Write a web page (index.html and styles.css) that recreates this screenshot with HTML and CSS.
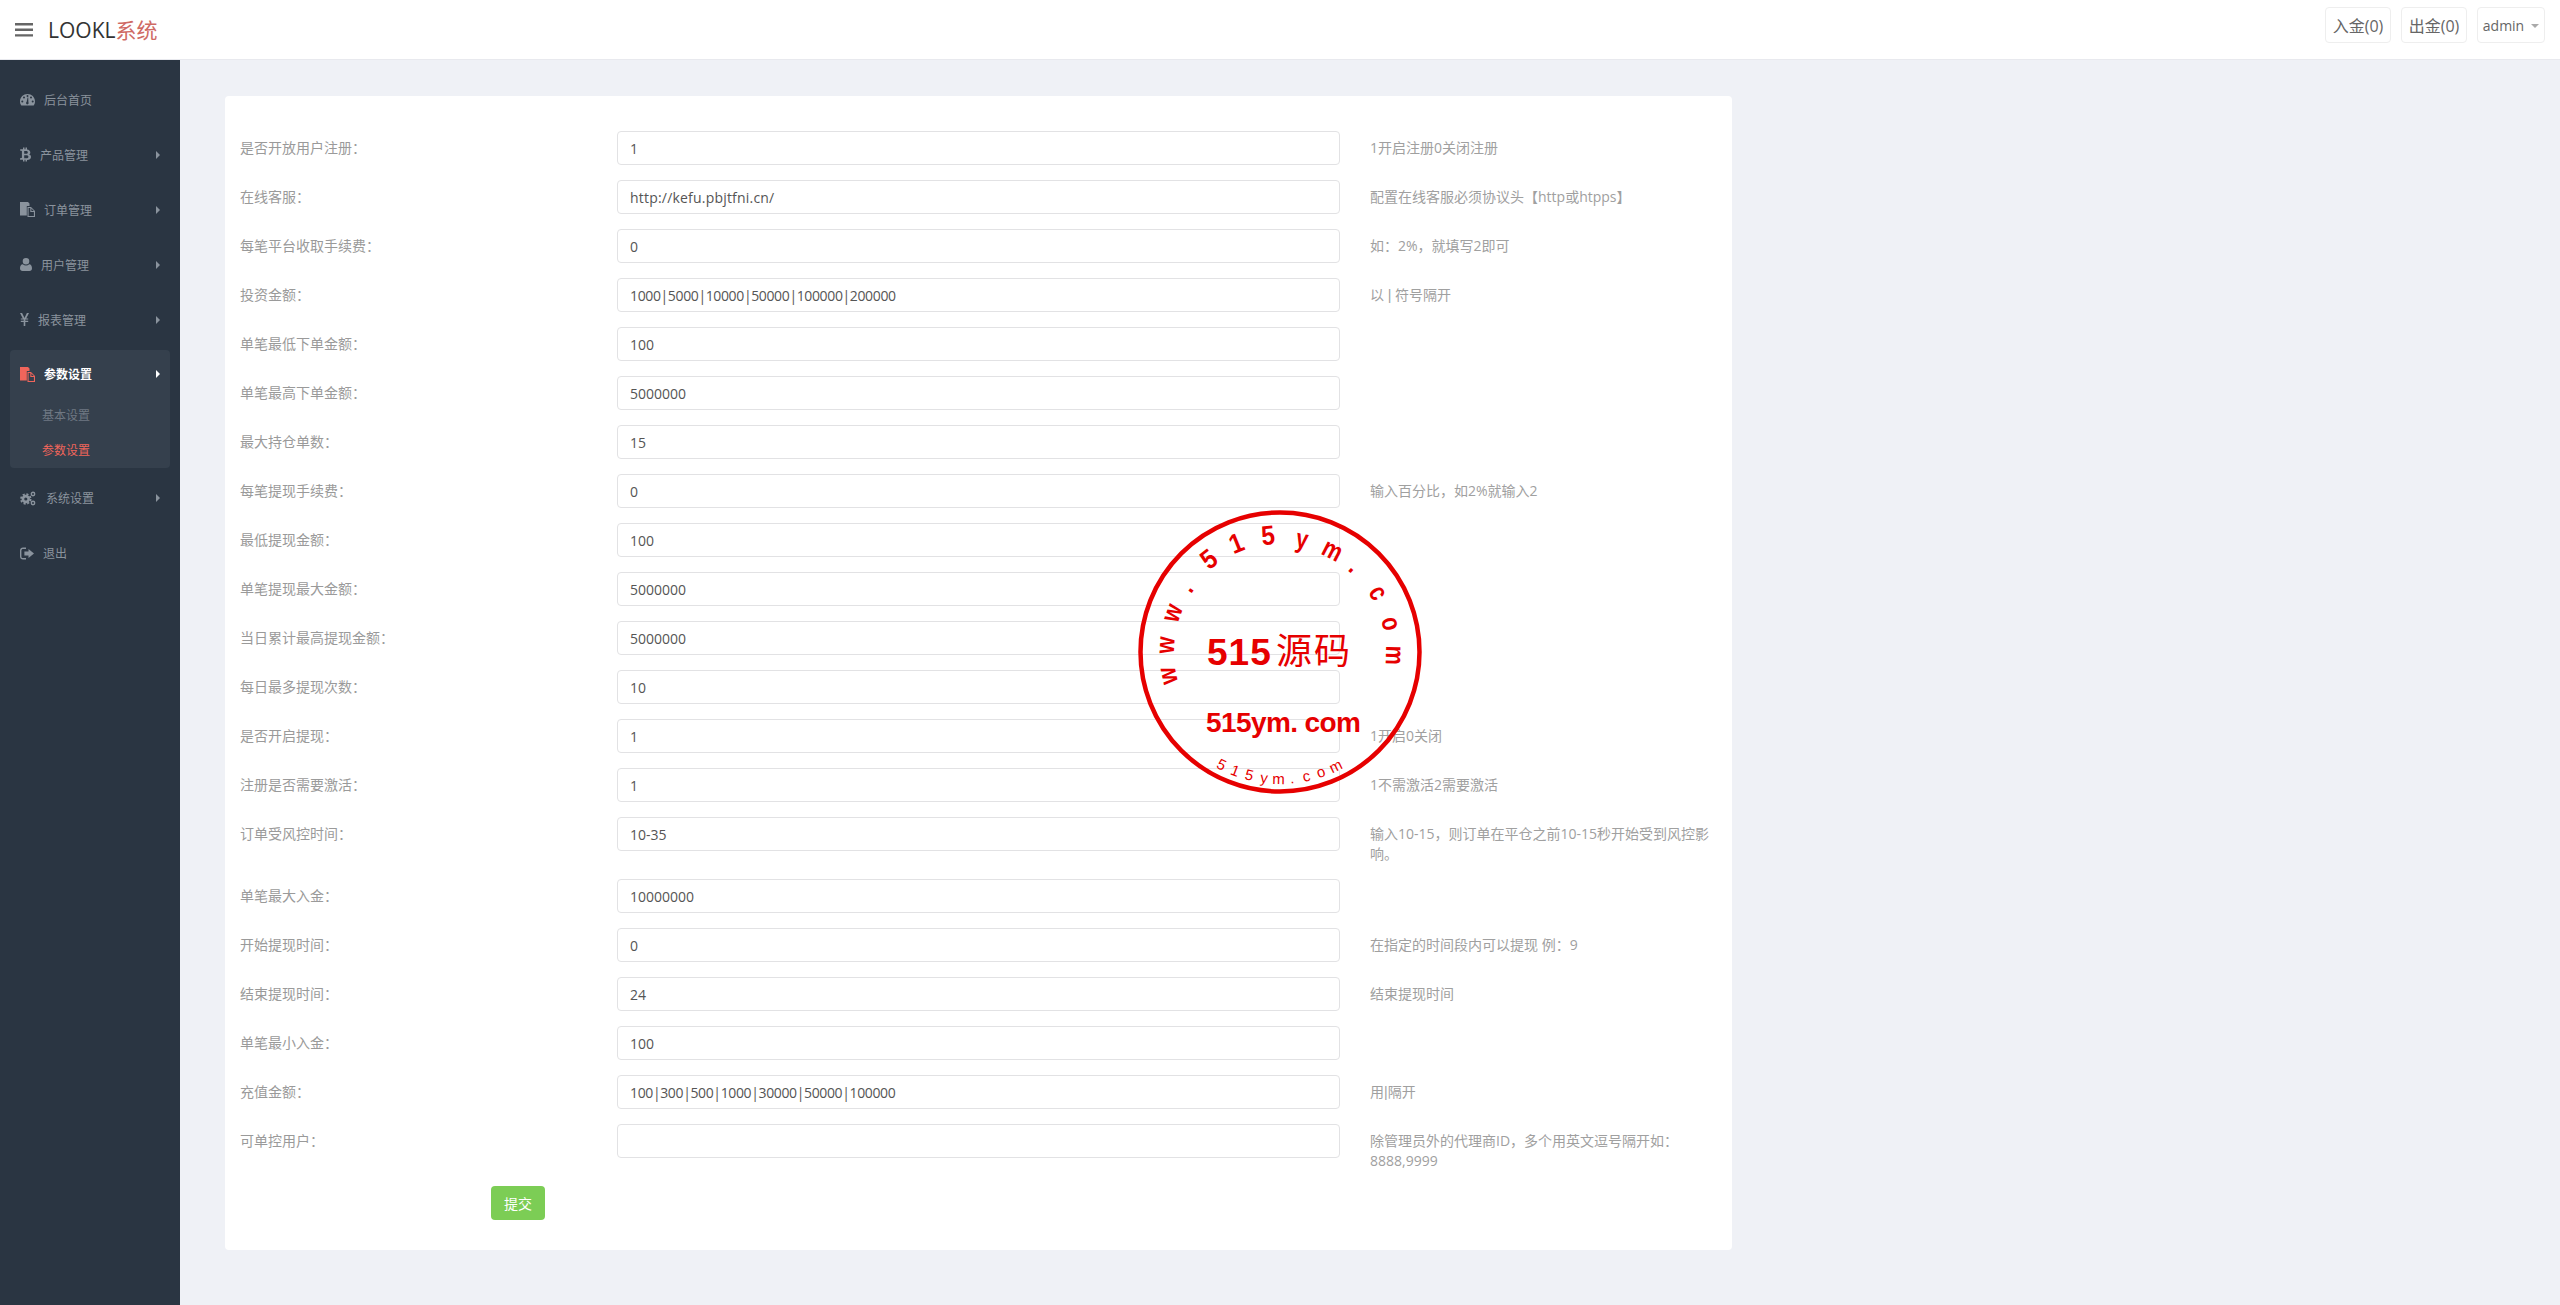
FILE: index.html
```html
<!DOCTYPE html>
<html lang="zh-CN">
<head>
<meta charset="utf-8">
<title>LOOKL系统</title>
<link rel="stylesheet" href="styles.css">
</head>
<body>
<header class="topbar">
  <div class="brand">
    <svg class="burger" viewBox="0 0 18 14"><path d="M0 0h18v2.400H0zM0 5.600h18V8H0zM0 11.200h18v2.400H0z"/></svg>
    <span class="logo">LOOKL<em>系统</em></span>
  </div>
  <div class="top-actions">
    <a class="top-btn">入金(0)</a>
    <a class="top-btn">出金(0)</a>
    <a class="top-btn top-user">admin<i class="caret"></i></a>
  </div>
</header>
<div class="layout">
  <aside class="sidebar">
    <ul class="nav">
      <li class="nav-item"><svg class="ico w15" viewBox="0 0 15 13"><path fill-rule="evenodd" d="M7.500 1C3.400 1 0 4.200 0 8.400c0 1.500.5 2.900 1.300 4h12.400c.8-1.100 1.300-2.500 1.300-4C15 4.200 11.600 1 7.500 1zM2.300 9.400a1 1 0 1 1 0-2 1 1 0 0 1 0 2zM4 5.600a1 1 0 1 1 0-2 1 1 0 0 1 0 2zM7.500 3.900a1 1 0 1 1 0-2 1 1 0 0 1 0 2zM8.400 9.300a1.300 1.300 0 1 1-1.800-.3l1-4.500h.6l.2 4.800zM11 5.600a1 1 0 1 1 0-2 1 1 0 0 1 0 2zM12.700 9.400a1 1 0 1 1 0-2 1 1 0 0 1 0 2z"/></svg><span>后台首页</span></li>
      <li class="nav-item"><svg class="ico w11" viewBox="0 0 11 14"><path fill-rule="evenodd" d="M3 0h1.500v1.800h1V0H7v1.900c2 .3 3.300 1.200 3.300 3 0 1-.5 1.700-1.300 2.100 1.200.3 2 1.200 2 2.500 0 2-1.600 2.800-4 2.900V14H5.500v-1.700h-1V14H3v-1.700H0l.3-1.800h1c.4 0 .6-.2.6-.6V3.800c0-.4-.3-.6-.7-.6H.2V1.800H3zM4.200 3.600v2.700h1.900c1 0 1.700-.4 1.700-1.350S7.100 3.600 6.100 3.600zM4.200 7.800v3h2.300c1.100 0 1.900-.5 1.900-1.500S7.600 7.800 6.500 7.800z"/></svg><span>产品管理</span><i class="arrow"></i></li>
      <li class="nav-item"><svg class="ico w15" viewBox="0 0 15 15"><path fill-rule="evenodd" d="M0 0h8l1.500 1.500V4H6.800v9.500H0zM7.500 5H11l4 4v6H7.500zM8.600 6.100V14h5.300V10h-3.600V6.100zM11.400 6.500v2.400h2.400z"/></svg><span>订单管理</span><i class="arrow"></i></li>
      <li class="nav-item"><svg class="ico w12" viewBox="0 0 12 13"><path d="M6 0a3.300 3.300 0 1 1 0 6.600A3.300 3.300 0 0 1 6 0zM2.800 6.200C3.700 7 4.800 7.400 6 7.400s2.300-.4 3.200-1.200C11 6.400 12 7.800 12 10.300c0 1.700-1 2.700-2.500 2.700h-7C1 13 0 12 0 10.300c0-2.500 1-3.900 2.800-4.100z"/></svg><span>用户管理</span><i class="arrow"></i></li>
      <li class="nav-item"><svg class="ico w9" viewBox="0 0 9 13"><path d="M0 0h2.100l2.400 5L6.900 0H9L6.200 5.400h2v1.200H5.300v1.100h2.900v1.200H5.300V13H3.700V8.900H.8V7.700h2.900V6.600H.8V5.400h2z"/></svg><span>报表管理</span><i class="arrow"></i></li>
      <li class="nav-group">
        <div class="nav-item nav-head"><svg class="ico w15" viewBox="0 0 15 15"><path fill-rule="evenodd" d="M0 0h8l1.500 1.500V4H6.800v9.500H0zM7.500 5H11l4 4v6H7.500zM8.600 6.100V14h5.300V10h-3.600V6.100zM11.400 6.500v2.400h2.400z"/></svg><span>参数设置</span><i class="arrow"></i></div>
        <a class="sub">基本设置</a>
        <a class="sub sub-on">参数设置</a>
      </li>
      <li class="nav-item"><svg class="ico w16 gears" viewBox="0 0 16 15"><circle class="g-body" cx="5.800" cy="8" r="2.900"/><circle class="g-teeth" cx="5.800" cy="8" r="4.800"/><circle class="g-small" cx="13" cy="3" r="1.700"/><circle class="g-small" cx="13" cy="12" r="1.700"/></svg><span>系统设置</span><i class="arrow"></i></li>
      <li class="nav-item"><svg class="ico w14" viewBox="0 0 14 12"><path d="M3 0h3v1.400H3c-.9 0-1.600.7-1.600 1.600v6c0 .9.7 1.600 1.600 1.600h3V12H3c-1.700 0-3-1.300-3-3V3c0-1.700 1.300-3 3-3zM8.500 1.500L14 6l-5.500 4.500V8H4.400V4h4.100z"/></svg><span>退出</span></li>
    </ul>
  </aside>
  <main class="content">
    <form class="card">
      <div class="row"><label>是否开放用户注册：</label><input value="1"><p>1开启注册0关闭注册</p></div>
      <div class="row"><label>在线客服：</label><input class="url" value="http://kefu.pbjtfni.cn/"><p>配置在线客服必须协议头【http或htpps】</p></div>
      <div class="row"><label>每笔平台收取手续费：</label><input value="0"><p>如：2%，就填写2即可</p></div>
      <div class="row"><label>投资金额：</label><input class="piped" value="1000|5000|10000|50000|100000|200000"><p>以 <span class="pipe">|</span> 符号隔开</p></div>
      <div class="row"><label>单笔最低下单金额：</label><input value="100"><p></p></div>
      <div class="row"><label>单笔最高下单金额：</label><input value="5000000"><p></p></div>
      <div class="row"><label>最大持仓单数：</label><input value="15"><p></p></div>
      <div class="row"><label>每笔提现手续费：</label><input value="0"><p>输入百分比，如2%就输入2</p></div>
      <div class="row"><label>最低提现金额：</label><input value="100"><p></p></div>
      <div class="row"><label>单笔提现最大金额：</label><input value="5000000"><p></p></div>
      <div class="row"><label>当日累计最高提现金额：</label><input value="5000000"><p></p></div>
      <div class="row"><label>每日最多提现次数：</label><input value="10"><p></p></div>
      <div class="row"><label>是否开启提现：</label><input value="1"><p>1开启0关闭</p></div>
      <div class="row"><label>注册是否需要激活：</label><input value="1"><p>1不需激活2需要激活</p></div>
      <div class="row"><label>订单受风控时间：</label><input value="10-35"><p>输入10-15，则订单在平仓之前10-15秒开始受到风控影响。</p></div>
      <div class="row"><label>单笔最大入金：</label><input value="10000000"><p></p></div>
      <div class="row"><label>开始提现时间：</label><input value="0"><p>在指定的时间段内可以提现 例：9</p></div>
      <div class="row"><label>结束提现时间：</label><input value="24"><p>结束提现时间</p></div>
      <div class="row"><label>单笔最小入金：</label><input value="100"><p></p></div>
      <div class="row"><label>充值金额：</label><input class="piped" value="100|300|500|1000|30000|50000|100000"><p>用<span class="pipe">|</span>隔开</p></div>
      <div class="row"><label>可单控用户：</label><input value=""><p>除管理员外的代理商ID，多个用英文逗号隔开如：8888,9999</p></div>
      <button type="button" class="submit">提交</button>
    </form>
  </main>
</div>
<svg class="stamp" viewBox="0 0 300 300" width="300" height="300">
  <circle cx="150" cy="150" r="139.500" class="ring"/>
  <g class="s-top">
    <text class="lc" transform="rotate(-102 150 150) translate(150 44) scale(.8 1)">w</text>
    <text class="lc" transform="rotate(-86.600 150 150) translate(150 44) scale(.8 1)">w</text>
    <text class="lc" transform="rotate(-70 150 150) translate(150 44) scale(.8 1)">w</text>
    <text class="lc" transform="rotate(-55.400 150 150) translate(150 44) scale(.8 1)">.</text>
    <text class="dg" transform="rotate(-37.500 150 150) translate(150 42) scale(.9 1)">5</text>
    <text class="dg" transform="rotate(-21.800 150 150) translate(150 42) scale(.9 1)">1</text>
    <text class="dg" transform="rotate(-5.800 150 150) translate(150 42) scale(.9 1)">5</text>
    <text class="lc" transform="rotate(11.100 150 150) translate(150 44) scale(.8 1)">y</text>
    <text class="lc" transform="rotate(27.300 150 150) translate(150 44) scale(.8 1)">m</text>
    <text class="lc" transform="rotate(41 150 150) translate(150 44) scale(.8 1)">.</text>
    <text class="lc" transform="rotate(58.900 150 150) translate(150 44) scale(.8 1)">c</text>
    <text class="lc" transform="rotate(75.600 150 150) translate(150 44) scale(.8 1)">o</text>
    <text class="lc" transform="rotate(91.700 150 150) translate(150 44) scale(.8 1)">m</text>
  </g>
  <text class="s-main" x="77" y="163">515</text>
  <text class="s-cjk" x="146" y="162">源码</text>
  <text class="s-sub" x="76" y="230">515ym. com</text>
  <g class="s-bot">
    <text transform="rotate(27.400 150 150) translate(150 282)">5</text>
    <text transform="rotate(20.700 150 150) translate(150 282)">1</text>
    <text transform="rotate(14 150 150) translate(150 282)">5</text>
    <text transform="rotate(7.200 150 150) translate(150 282)">y</text>
    <text transform="rotate(.7 150 150) translate(150 282)">m</text>
    <text transform="rotate(-5.500 150 150) translate(150 282)">.</text>
    <text transform="rotate(-12 150 150) translate(150 282)">c</text>
    <text transform="rotate(-18.800 150 150) translate(150 282)">o</text>
    <text transform="rotate(-26 150 150) translate(150 282)">m</text>
  </g>
</svg>
</body>
</html>
```
FILE: styles.css
```css
* { box-sizing: border-box; }
html, body { margin: 0; height: 1305px; overflow: hidden; }
body {
  font-family: "Open Sans", "Noto Sans CJK SC", sans-serif;
  font-size: 14px;
  background: #eff1f6;
  color: #999;
}
.topbar {
  height: 60px;
  background: #fff;
  border-bottom: 1px solid #e8e9ee;
  display: flex;
  align-items: center;
  justify-content: space-between;
  padding: 0 15px;
}
.brand { display: flex; align-items: center; }
.burger { width: 18px; height: 14px; fill: #666; margin-right: 15px; }
.logo { font-size: 21px; color: #333; line-height: 30px; }
.logo em { font-style: normal; color: #cf6a64; }
.top-actions { display: flex; gap: 10px; align-self: flex-start; margin-top: 7px; }
.top-btn {
  height: 36px;
  min-width: 66px;
  padding: 0 4px;
  border: 1px solid #eeeeee;
  border-radius: 4px;
  color: #666;
  font-size: 16px;
  display: flex;
  align-items: center;
  justify-content: center;
}
.top-user { font-size: 14px; min-width: 68px; gap: 7px; }
.caret { border: 4px solid transparent; border-top-color: #aaa; border-bottom: 0; margin-top: 2px; }
.layout { display: flex; height: 1245px; }
.sidebar { width: 180px; flex: none; background: #2a3542; }
.nav { list-style: none; margin: 0; padding: 12px 0 0; }
.nav-item {
  height: 55px;
  padding: 0 20px;
  display: flex;
  align-items: center;
  font-size: 12px;
  color: #8a939d;
  position: relative;
}
.ico { height: 15px; fill: #8a939d; margin-right: 9px; flex: none; }
.w9 { width: 9px; }
.w11 { width: 11px; }
.w12 { width: 12px; }
.w14 { width: 14px; }
.w15 { width: 15px; }
.w16 { width: 16px; margin-right: 10px; }
.gears circle { fill: none; stroke: #8a939d; }
.gears .g-body { stroke-width: 2.600; }
.gears .g-teeth { stroke-width: 1.800; stroke-dasharray: 2.100 1.670; }
.gears .g-small { stroke-width: 1.400; }
.arrow {
  position: absolute;
  left: 156px;
  top: 50%;
  margin-top: -4px;
  border-left: 4px solid #8a939d;
  border-top: 4px solid transparent;
  border-bottom: 4px solid transparent;
}
.nav-group {
  margin: 3px 10px 2.500px;
  height: 118px;
  background: #35404d;
  border-radius: 4px;
}
.nav-head { height: 48px; padding: 0 10px; color: #fff; font-weight: 700; }
.nav-head .ico { fill: #f0655b; }
.nav-head .arrow { left: 146px; border-left-color: #fff; }
.sub {
  display: block;
  height: 35px;
  line-height: 35px;
  padding-left: 32px;
  font-size: 12px;
  color: #6f7883;
}
.sub-on { color: #f0655b; }
.content { flex: 1; padding: 36px 0 0 45px; }
.card {
  width: 1507px;
  height: 1154px;
  background: #fff;
  border-radius: 4px;
  padding: 35px 15px 0;
}
.row {
  display: grid;
  grid-template-columns: 377px 723px 377px;
  margin-bottom: 15px;
}
.row label { padding-top: 7px; line-height: 20px; color: #9a9a9a; }
.row input {
  width: 723px;
  height: 34px;
  padding: 6px 12px;
  border: 1px solid #e2e2e4;
  border-radius: 4px;
  font: inherit;
  color: #555;
  background: #fff;
}
.row input.piped { letter-spacing: -.37px; }
.row input.url { letter-spacing: .2px; }
.row p {
  margin: 0 0 0 30px;
  padding-top: 7px;
  line-height: 20px;
  color: #a0a0a0;
  min-height: 34px;
  width: 342px;
}
.pipe { font-family: "Liberation Sans", sans-serif; }
.submit {
  display: block;
  margin-left: 251px;
  width: 54px;
  height: 34px;
  border: 0;
  border-radius: 4px;
  background: #7ccd55;
  color: #fff;
  font: inherit;
}
.stamp {
  position: absolute;
  left: 1130px;
  top: 502px;
  pointer-events: none;
}
.ring { fill: none; stroke: #e60000; stroke-width: 4.500; }
.stamp text { fill: #e60000; font-family: "Liberation Sans", "Noto Sans CJK SC", sans-serif; }
.s-top text { text-anchor: middle; font-weight: 700; }
.s-top .lc { font-size: 27px; }
.s-top .dg { font-size: 27px; }
.s-main { font-size: 37px; font-weight: 700; letter-spacing: 1px; }
.s-cjk { font-size: 36px; letter-spacing: 2px; }
.s-sub { font-size: 28px; font-weight: 700; letter-spacing: -.6px; }
.s-bot text { text-anchor: middle; font-size: 15px; }
```
